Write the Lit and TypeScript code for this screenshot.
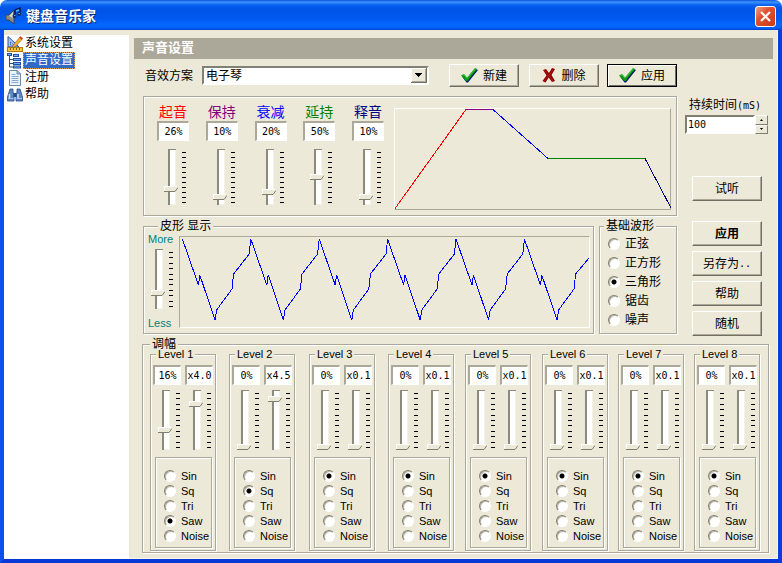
import { LitElement, html, svg, css } from "lit";
import { customElement, state } from "lit/decorators.js";

interface Stage { name: string; tone: string; value: number; }
interface Level { amp: number; mult: string; wave: string; }

const STAGES: Stage[] = [
  { name: "起音", tone: "red", value: 26 },
  { name: "保持", tone: "purple", value: 10 },
  { name: "衰减", tone: "blue", value: 20 },
  { name: "延持", tone: "green", value: 50 },
  { name: "释音", tone: "navy", value: 10 },
];

const LEVELS: Level[] = [
  { amp: 16, mult: "4.0", wave: "Saw" },
  { amp: 0, mult: "4.5", wave: "Sq" },
  ...Array.from({ length: 6 }, () => ({ amp: 0, mult: "0.1", wave: "Sin" })),
];

const SHAPES = ["Sin", "Sq", "Tri", "Saw", "Noise"];
const BASES = ["正弦", "正方形", "三角形", "锯齿", "噪声"];

// One period of the preview wave, relative to its peak.
const PERIOD = 68.4;
const CYCLE = [[0, 2], [16, 48], [17.4, 38], [32.6, 83], [34.2, 73], [49.6, 52], [51.2, 37], [66.8, 17]];

const wavePoints = () => {
  const pts: string[] = [];
  for (let i = 0; i < 6; i++) {
    for (const [x, y] of CYCLE) {
      const px = 2.4 + i * PERIOD + x;
      if (px < 409) pts.push(`${px.toFixed(1)},${y}`);
    }
  }
  pts.push("409,21");
  return pts.join(" ");
};

const checkIcon = html`<svg class="ico" width="17" height="15" viewBox="0 0 17 15">
  <path d="M1 8.5L3.5 7L6.3 10.3L14.5 1L17 2L7 14.5H5.5z" fill="#0a1a6a"/>
  <path d="M0 7.5L3 6L6 9.5L14 0L16 1L6.5 13H5z" fill="#0a9a14"/>
  <path d="M1.5 7.2L3 6.8L6 10.3L14.3 1" fill="none" stroke="#3cc83c" stroke-width="1"/></svg>`;

const crossIcon = html`<svg class="ico" width="14" height="15" viewBox="0 0 14 15">
  <path d="M1 2L4 1L7 5L10 0L13 1L9.5 7L13 13L10 14L6.7 9.5L3.5 14.5L0.5 13L4.5 7.5z" fill="#8c0000"/>
  <path d="M2.5 2.5L11 13M11 2L2.5 13" stroke="#b01818" stroke-width="1"/></svg>`;

const NAV = [
  {
    text: "系统设置",
    icon: svg`<path d="M1 0.5V11H12z" fill="#a8c8f0" stroke="#2450a8"/><path d="M3.5 6V9H7z" fill="#fff" stroke="#2450a8" stroke-width=".7"/>
      <path d="M6 9.5L12.5 1.5L15 3.5L8.5 10.5L6 11.5z" fill="#f4b02c" stroke="#8a5a10" stroke-width=".6"/><path d="M12.2 1.6L13.4 0.3L16 2.4L14.8 3.8z" fill="#d83020"/>
      <rect x=".5" y="11.5" width="15" height="4" fill="#f8c838" stroke="#b07810"/><path d="M3.5 12v2M6.5 12v2M9.5 12v2M12.5 12v2" stroke="#8a5a10"/>`,
  },
  {
    text: "声音设置",
    icon: svg`<path d="M2.5 3V14H7M2.5 6.5H7M2.5 10.5H7" fill="none" stroke="#30506c"/>
      <g fill="#7cb4f0" stroke="#1c50a0"><rect x=".5" y=".5" width="4" height="2"/><rect x="6.5" y="1.5" width="5" height="2"/><rect x="6.5" y="5.5" width="7" height="2"/><rect x="6.5" y="9.5" width="7" height="2"/><rect x="6.5" y="13" width="7" height="2"/></g>`,
  },
  {
    text: "注册",
    icon: svg`<path d="M2.5 .5H10L13.5 4V15.5H2.5z" fill="#eaf2fc" stroke="#6c88a8"/><path d="M10 .5V4H13.5z" fill="#b8d0ec" stroke="#6c88a8"/>
      <path d="M4.5 4.5H8.5M4.5 6.5H11.5M4.5 8.5H11.5M4.5 10.5H11.5M4.5 12.5H11.5" stroke="#88a8cc"/>`,
  },
  {
    text: "帮助",
    icon: svg`<path d="M3 2H6V5L7 8V14H.5V10z" fill="#5c88c4" stroke="#284c88" stroke-width=".8"/><path d="M13 2H10V5L9 8V14H15.5V10z" fill="#5c88c4" stroke="#284c88" stroke-width=".8"/>
      <rect x="6.5" y="6" width="3" height="4" fill="#284c88"/><path d="M2.5 7V12M11 7V12" stroke="#c8e0f8" stroke-width="1.5"/><path d="M1 11.5H6.5M9.5 11.5H15" stroke="#a0c4ec"/>`,
  },
];

@customElement("app-root")
export class AppRoot extends LitElement {
  @state() private page = "声音设置";

  static styles = css`
    :host {
      display: flex;
      flex-direction: column;
      min-height: 100vh;
      box-sizing: border-box;
      background: #ece9d8;
      font: 12px/14px "Liberation Sans", "Noto Sans CJK SC", sans-serif;
      color: #000;
    }
    * { box-sizing: border-box; }
    button, input, select { font: inherit; color: inherit; margin: 0; }
    button { padding: 0; }
    .frame {
      flex: 1;
      display: flex;
      flex-direction: column;
      background: #fff;
    }
    .titlebar {
      height: 30px;
      display: flex;
      align-items: center;
      gap: 4px;
      padding: 2px 6px 0;
      border-radius: 7px 7px 0 0;
      background: linear-gradient(#0a50d8 0, #3c94ff 2px, #0a62f0 5px, #0054e6 9px, #0058ee 18px, #0468ff 25px, #0060f8 28px, #0040c8 30px);
    }
    .title {
      flex: 1;
      margin: 0;
      font-size: 14px;
      line-height: 16px;
      font-weight: 700;
      color: #fff;
      text-shadow: 1px 1px 0 #0a246a;
    }
    .close {
      width: 21px;
      height: 21px;
      display: grid;
      place-items: center;
      border: 1px solid #fff;
      border-radius: 3px;
      background: linear-gradient(135deg, #f0a088, #e0502c 40%, #c83c14);
    }
    .body {
      flex: 1;
      display: flex;
      background: #ece9d8;
      border: 4px solid #0a50ee;
      border-top: 0;
      border-right-color: #0a3ce0;
      border-bottom-color: #0838d8;
      box-shadow: inset -1px -1px 0 #f8f6ee;
    }
    .nav {
      width: 125px;
      margin-top: 5px;
      background: #fff;
      flex: none;
    }
    .nav ul { list-style: none; margin: 0; padding: 0 0 0 3px; }
    .nav a {
      display: flex;
      align-items: center;
      height: 17px;
      color: #000;
      text-decoration: none;
    }
    .nav span { padding: 0 1px; line-height: 15px; border: 1px solid transparent; }
    .nav .on span { background: #316ac5; color: #fff; border: 1px dotted #e0a050; }
    .main { flex: 1; min-width: 0; padding: 8px 5px 5px; }
    .heading {
      margin: 0 0 5px;
      height: 21px;
      padding-left: 8px;
      font-size: 13px;
      line-height: 20px;
      font-weight: 700;
      color: #fff;
      background: #aca899;
    }
    .page { padding: 0 4px 0 8px; }
    .upper {
      display: grid;
      grid-template-columns: minmax(0, 1fr) 84px;
      column-gap: 8px;
      padding-left: 1px;
      margin-bottom: 3px;
    }
    .toolbar { display: flex; align-items: center; height: 23px; margin-bottom: 9px; }
    .toolbar label { padding: 0 9px 0 2px; line-height: 18px; }
    .combo {
      flex: 1;
      min-width: 0;
      height: 19px;
      margin-right: 20px;
      padding: 0 18px 0 2px;
      appearance: none;
      border: 2px solid;
      border-color: #808074 #fff #fff #808074;
      border-radius: 0;
      line-height: 14px;
      background: #fff url('data:image/svg+xml,<svg xmlns="http://www.w3.org/2000/svg" width="16" height="15"><path d="M0 0h16v15H0z" fill="%23716f64"/><path d="M0 0h15v14H0z" fill="%23fff"/><path d="M1 1h14v13H1z" fill="%23aca899"/><path d="M1 1h13v12H1z" fill="%23ece9d8"/><path d="M4 5h7v1H4zM5 6h5v1H5zM6 7h3v1H6zM7 8h1v1H7z"/></svg>') no-repeat right center;
    }
    .btn {
      width: 70px;
      height: 25px;
      display: flex;
      align-items: center;
      justify-content: center;
      gap: 5px;
      background: #ece9d8;
      border: 1px solid;
      border-color: #fff #716f64 #716f64 #fff;
      box-shadow: inset -1px -1px 0 #aca899;
    }
    .tool { height: 23px; margin-left: 10px; }
    .tool:first-of-type { margin-left: 0; }
    .preset { margin-left: 8px; border-color: #000; box-shadow: inset 1px 1px 0 #fff, inset -1px -1px 0 #716f64; }
    .ico { flex: none; }
    .etched {
      margin: 0;
      min-width: 0;
      padding: 0;
      border: 1px solid #aca899;
      box-shadow: 1px 1px 0 #fff, inset 1px 1px 0 #fff;
    }
    legend { background: #ece9d8; line-height: 10px; padding: 0 2px; }
    .envelope { display: flex; height: 120px; padding: 7px 5px 0 13px; margin-bottom: 5px; }
    .stages { display: grid; grid-template-columns: repeat(5, 32px); justify-content: space-between; flex: none; width: 227px; margin-right: 10px; }
    .stage label { display: block; font-size: 14px; line-height: 17px; white-space: nowrap; text-align: center; }
    .red { color: #f00; }
    .purple { color: #800080; }
    .blue { color: #00f; }
    .green { color: #008000; }
    .navy { color: #000080; }
    .value {
      display: block;
      height: 20px;
      border: 2px solid #aca899;
      border-width: 2px 1px 1px 2px;
      border-right-color: #fff;
      border-bottom-color: #fff;
      background: #fff;
      color: #000;
      text-align: center;
      line-height: 18px;
      white-space: nowrap;
      overflow: hidden;
    }
    .mono { font-family: "DejaVu Sans Mono", "Noto Sans CJK SC", monospace; font-size: 10px; }
    .slider { display: flex; gap: 6px; width: 18px; }
    .stage .slider { margin: 8px 0 0 11px; }
    .slider input {
      appearance: none;
      writing-mode: vertical-lr;
      direction: rtl;
      width: 8px;
      flex: none;
      background: #fff;
      box-shadow: inset 2px 1px 0 #8c8a7c, inset -1px -1px 0 #f4f2e8;
      outline: none;
    }
    .short input { height: 56px; }
    .tall input { height: 60px; }
    .slider input::-webkit-slider-thumb {
      appearance: none;
      width: 14px;
      height: 6px;
      margin-left: -2px;
      background: url('data:image/svg+xml,<svg xmlns="http://www.w3.org/2000/svg" width="14" height="6"><path d="M0 0H14L11 6H0z" fill="%23ece9d8"/><path d="M0 .5H13M.5 0V5" stroke="%23fff"/><path d="M0 5.5H11L14 1.5" fill="none" stroke="%23807e70"/></svg>') no-repeat;
    }
    .plot { flex: 1; min-width: 0; border: 1px solid; }
    .plot svg { display: block; width: 100%; height: 100%; overflow: visible; }
    .plot polyline { fill: none; stroke: currentColor; vector-effect: non-scaling-stroke; shape-rendering: crispEdges; }
    .raised { height: 102px; margin-top: 4px; border-color: #fff #aca899 #aca899 #fff; }
    .sunken { height: 92px; margin-top: 5px; border-color: #aca899 #fff #fff #aca899; }
    .waves { display: grid; grid-template-columns: minmax(0, 1fr) 78px; gap: 5px; }
    .preview { height: 113px; }
    .preview legend { margin-left: 14px; }
    .row { display: flex; gap: 5px; padding: 0 3px 0 4px; }
    .scale { width: 26px; flex: none; display: flex; flex-direction: column; padding-top: 2px; font-size: 11px; line-height: 12px; color: #008080; }
    .scale .slider { margin: 4px 0 8px 7px; }
    .bases { height: 113px; }
    .bases legend { margin-left: 4px; }
    .bases div { padding: 3px 0 0 8px; }
    .opt { display: flex; align-items: center; gap: 5px; height: 19px; white-space: nowrap; }
    .opt input {
      appearance: none;
      width: 12px;
      height: 12px;
      flex: none;
      border: 1px solid;
      border-color: #807e70 #fff #fff #807e70;
      border-radius: 50%;
      background: #fff;
      box-shadow: inset 1px 1px 0 #b8b4a4;
    }
    .opt input:checked { background: radial-gradient(circle, #000 2px, #fff 3px); }
    .side { padding-top: 34px; }
    .side label { display: block; padding-left: 4px; line-height: 14px; margin-bottom: 2px; white-space: nowrap; }
    .spin { display: flex; height: 19px; margin-bottom: 42px; }
    .spin input {
      width: 70px;
      padding: 0 1px;
      border: 2px solid;
      border-color: #807e70 #fff #fff #807e70;
      background: #fff;
      font: 10px/14px "DejaVu Sans Mono", monospace;
    }
    .arrows { display: grid; width: 13px; }
    .arrows button {
      display: grid;
      place-items: center;
      background: #ece9d8;
      border: 1px solid;
      border-color: #fff #807e70 #807e70 #fff;
    }
    .actions { display: grid; gap: 5px; padding-left: 7px; }
    .actions .btn { gap: 0; }
    .listen { margin-bottom: 15px; }
    .strong { font-weight: 700; }
    .levels > legend { margin-left: 7px; }
    .bank {
      display: grid;
      grid-template-columns: 79fr 80fr 79fr 77fr 77fr 76fr 76fr 66px;
      padding: 0 8px 1px 7px;
    }
    .level { width: 66px; height: 202px; font-size: 11px; }
    .level legend { margin-left: 5px; }
    .inner { padding: 6px 2px 0; }
    .pair { display: flex; gap: 4px; }
    .pair .value { width: 28px; }
    .faders { display: flex; gap: 13px; padding: 5px 0 7px 9px; }
    .shapes { margin: 0 1px 0 2px; padding: 10px 0 4px 8px; }
    .shapes .opt { height: 15px; gap: 5px; }
  `;

  private slider(label: string, size: "short" | "tall", min: number, max: number, step: number, value: number) {
    const height = size === "short" ? 56 : 60;
    const travel = height - 6;
    return html`<div class="slider ${size}">
      <input type="range" aria-label=${label} min=${min} max=${max} step=${step} .value=${String(value)}>
      <svg width="4" height=${height} aria-hidden="true">
        ${Array.from({ length: 11 }, (_, i) => svg`<rect y=${3 + Math.round((travel * i) / 10)} width="4" height="1"/>`)}
      </svg>
    </div>`;
  }

  private option(group: string, text: string, checked: boolean) {
    return html`<label class="opt"><input type="radio" name=${group} .checked=${checked}>${text}</label>`;
  }

  private level(l: Level, i: number) {
    const n = i + 1;
    return html`<fieldset class="etched level">
      <legend>Level ${n}</legend>
      <div class="inner">
        <div class="pair"><output class="value mono">${l.amp}%</output><output class="value mono">x${l.mult}</output></div>
        <div class="faders">
          ${this.slider(`Level ${n} %`, "tall", 0, 50, 1, l.amp)}
          ${this.slider(`Level ${n} x`, "tall", 0.1, 5, 0.1, Number(l.mult))}
        </div>
        <div class="etched shapes">${SHAPES.map((s) => this.option(`level${n}`, s, s === l.wave))}</div>
      </div>
    </fieldset>`;
  }

  render() {
    return html`<div class="frame">
      <header class="titlebar">
        <svg width="16" height="18" viewBox="0 0 16 18">
          <path d="M0 8H3L8 3V17L3 13H0z" fill="#8c8c84" stroke="#303030" stroke-width=".7"/><path d="M3 9L7 5V11z" fill="#d8d8d0"/>
          <path d="M9 3L14 1V7M9 3V9" fill="none" stroke="#001858" stroke-width="1.5"/><circle cx="8.5" cy="9" r="2" fill="#102c60"/><circle cx="13" cy="7" r="2" fill="#102c60"/>
          <path d="M10 4L13 3" stroke="#50b8f0" stroke-width="1.5"/><path d="M8 8.5h1.5M12.5 6.5H14" stroke="#50b8f0"/>
        </svg>
        <h1 class="title">键盘音乐家</h1>
        <button class="close" aria-label="Close"><svg width="13" height="13" viewBox="0 0 13 13"><path d="M2 2L11 11M11 2L2 11" stroke="#fff" stroke-width="2.2"/></svg></button>
      </header>
      <div class="body">
        <nav class="nav"><ul>
          ${NAV.map((n) => html`<li><a href="#" class=${n.text === this.page ? "on" : ""} @click=${(e: Event) => { e.preventDefault(); this.page = n.text; }}>
            <svg width="16" height="16" viewBox="0 0 16 16">${n.icon}</svg><span>${n.text}</span></a></li>`)}
        </ul></nav>
        <main class="main">
          <h2 class="heading">声音设置</h2>
          <div class="page">
            <div class="upper">
              <div>
                <div class="toolbar">
                  <label for="scheme">音效方案</label>
                  <select class="combo" id="scheme"><option>电子琴</option></select>
                  <button class="btn tool">${checkIcon}新建</button>
                  <button class="btn tool">${crossIcon}删除</button>
                  <button class="btn tool preset">${checkIcon}应用</button>
                </div>
                <section class="etched envelope">
                  <div class="stages">
                    ${STAGES.map((s) => html`<div class="stage">
                      <label class=${s.tone} for=${s.tone}>${s.name}</label>
                      <output class="value mono" id=${s.tone}>${s.value}%</output>
                      ${this.slider(s.name, "short", 0, 100, 1, s.value)}
                    </div>`)}
                  </div>
                  <div class="plot raised">
                    <svg viewBox="0 0 275 100" preserveAspectRatio="none">
                      <polyline class="red" points="0,99.5 71,0.5"/>
                      <polyline class="purple" points="71,0.5 98,0.5"/>
                      <polyline class="blue" points="98,0.5 153,49.5"/>
                      <polyline class="green" points="153,49.5 250,49.5"/>
                      <polyline class="navy" points="250,49.5 276,99"/>
                    </svg>
                  </div>
                </section>
                <div class="waves">
                  <fieldset class="etched preview">
                    <legend>皮形 显示</legend>
                    <div class="row">
                      <div class="scale"><span>More</span>${this.slider("皮形 显示", "tall", 0, 100, 1, 24)}<span>Less</span></div>
                      <div class="plot sunken"><svg viewBox="0 0 409 90" preserveAspectRatio="none"><polyline class="blue" points=${wavePoints()}/></svg></div>
                    </div>
                  </fieldset>
                  <fieldset class="etched bases">
                    <legend>基础波形</legend>
                    <div>${BASES.map((b) => this.option("base", b, b === "三角形"))}</div>
                  </fieldset>
                </div>
              </div>
              <aside class="side">
                <label for="duration">持续时间<span class="mono">(mS)</span></label>
                <div class="spin">
                  <input id="duration" type="text" value="100">
                  <div class="arrows">
                    <button aria-label="+"><svg width="3" height="2"><path d="M0 2L1.5 0L3 2z"/></svg></button>
                    <button aria-label="-"><svg width="3" height="2"><path d="M0 0L1.5 2L3 0z"/></svg></button>
                  </div>
                </div>
                <div class="actions">
                  <button class="btn listen">试听</button>
                  <button class="btn strong">应用</button>
                  <button class="btn">另存为<span class="mono">..</span></button>
                  <button class="btn">帮助</button>
                  <button class="btn">随机</button>
                </div>
              </aside>
            </div>
            <fieldset class="etched levels">
              <legend>调幅</legend>
              <div class="bank">${LEVELS.map((l, i) => this.level(l, i))}</div>
            </fieldset>
          </div>
        </main>
      </div>
    </div>`;
  }
}
